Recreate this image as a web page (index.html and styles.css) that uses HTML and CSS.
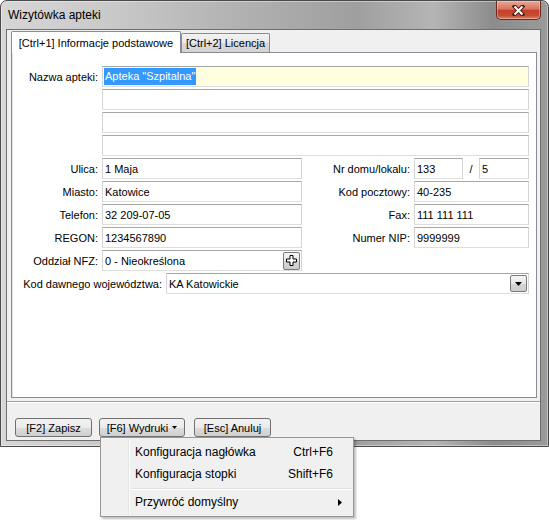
FILE: index.html
```html
<!DOCTYPE html>
<html lang="pl">
<head>
<meta charset="utf-8">
<title>Wizytówka apteki</title>
<link rel="stylesheet" href="styles.css">
</head>
<body>
<div class="screen">
<div class="window">
  <div class="titlebar">
    <span class="title">Wizytówka apteki</span>
    <div class="close">
      <svg width="13" height="11" viewBox="0 0 13 11"><path d="M2.5 1.5 L10.5 9.5 M10.5 1.5 L2.5 9.5" stroke="#4a1d15" stroke-width="4" stroke-linecap="square"/><path d="M2.5 1.5 L10.5 9.5 M10.5 1.5 L2.5 9.5" stroke="#fff" stroke-width="2"/></svg>
    </div>
  </div>
  <div class="client">
    <div class="tabs">
      <div class="tab active">[Ctrl+1] Informacje podstawowe</div>
      <div class="tab">[Ctrl+2] Licencja</div>
    </div>
    <div class="panel">
      <div class="form">
        <div class="lab">Nazwa apteki:</div>
        <div class="edit wide yellow"><span class="sel">Apteka "Szpitalna"</span></div>
        <div class="edit wide"></div>
        <div class="edit wide"></div>
        <div class="edit wide"></div>

        <div class="lab">Ulica:</div>
        <div class="edit">1 Maja</div>
        <div class="lab">Nr domu/lokalu:</div>
        <div class="pair"><div class="edit e1">133</div><span class="slash">/</span><div class="edit e2">5</div></div>

        <div class="lab">Miasto:</div>
        <div class="edit">Katowice</div>
        <div class="lab">Kod pocztowy:</div>
        <div class="edit">40-235</div>

        <div class="lab">Telefon:</div>
        <div class="edit">32 209-07-05</div>
        <div class="lab">Fax:</div>
        <div class="edit">111 111 111</div>

        <div class="lab">REGON:</div>
        <div class="edit">1234567890</div>
        <div class="lab">Numer NIP:</div>
        <div class="edit">9999999</div>

        <div class="lab">Oddział NFZ:</div>
        <div class="edit with-btn"><span>0 - Nieokreślona</span><span class="btn-small plus"><svg width="11" height="11" viewBox="0 0 11 11"><polygon points="4,0.5 7,0.5 7,4 10.5,4 10.5,7 7,7 7,10.5 4,10.5 4,7 0.5,7 0.5,4 4,4" fill="#fff" stroke="#000" stroke-width="1"/></svg></span></div>

        <div class="combo-row">
          <div class="lab lab-long">Kod dawnego województwa:</div>
          <div class="edit combo"><span>KA Katowickie</span><span class="btn-small dd"><svg width="7" height="4" viewBox="0 0 7 4"><polygon points="0,0 7,0 3.5,4" fill="#000"/></svg></span></div>
        </div>
      </div>
    </div>
    <div class="footer">
      <div class="btn">[F2] Zapisz</div>
      <div class="btn wide-btn">[F6] Wydruki <svg width="5" height="3" viewBox="0 0 5 3"><polygon points="0,0 5,0 2.5,3" fill="#000"/></svg></div>
      <div class="btn last">[Esc] Anuluj</div>
    </div>
  </div>
</div>

<div class="menu">
  <div class="item"><span>Konfiguracja nagłówka</span><span>Ctrl+F6</span></div>
  <div class="item"><span>Konfiguracja stopki</span><span>Shift+F6</span></div>
  <div class="sep"></div>
  <div class="item sub"><span>Przywróć domyślny</span><svg width="4" height="7" viewBox="0 0 4 7"><polygon points="0,0 4,3.5 0,7" fill="#000"/></svg></div>
</div>
</div>
</body>
</html>
```

FILE: styles.css
```css
* { box-sizing: border-box; }

html, body {
  margin: 0;
  background: #fff;
}

body {
  font: 11px "Liberation Sans", Arial, sans-serif;
  color: #000;
}

.screen {
  position: relative;
  width: 549px;
  height: 520px;
  overflow: hidden;
}

.window {
  width: 549px;
  height: 447px;
  border: 1px solid #4a4a4a;
  border-radius: 7px 7px 0 0;
  padding: 0 7px 5px 5px;
  display: flex;
  flex-direction: column;
  background: linear-gradient(to right, #d6d6d6 0%, #c9c9c9 20%, #b0b0b0 45%, #9f9f9f 65%, #b5b5b5 79%, #8c8c8c 90%, #9a9a9a 100%);
  box-shadow: inset 0 0 0 1px rgba(255,255,255,.4);
}

.titlebar {
  flex: none;
  height: 28px;
  display: flex;
  align-items: center;
  justify-content: space-between;
}

.title {
  font-size: 12px;
  padding-left: 2px;
}

.close {
  align-self: flex-start;
  width: 45px;
  height: 19px;
  border: 1px solid #6b2a20;
  border-top: none;
  border-radius: 0 0 5px 5px;
  background: linear-gradient(#eaa796, #d9735d 45%, #c2412a 52%, #c84a30 80%, #de8568);
  box-shadow: inset 0 0 0 1px rgba(255,255,255,.3);
  display: flex;
  align-items: center;
  justify-content: center;
}

.client {
  flex: 1;
  background: #f0f0f0;
  border: 1px solid #6e6e6e;
  display: flex;
  flex-direction: column;
  padding: 0 3px 0 4px;
}

.tabs {
  flex: none;
  height: 22px;
  display: flex;
  align-items: flex-end;
  position: relative;
  z-index: 1;
}

.tab {
  height: 19px;
  width: 89px;
  border: 1px solid #898c95;
  border-bottom: none;
  border-radius: 2px 2px 0 0;
  background: linear-gradient(#f3f3f3, #e8e8e8 50%, #dadada 51%, #d3d3d3);
  display: flex;
  align-items: center;
  justify-content: center;
  white-space: nowrap;
}

.tab.active {
  width: 170px;
  height: 22px;
  margin-bottom: -1px;
  background: #fff;
}

.panel {
  flex: 1;
  background: #fff;
  border: 1px solid #898c95;
  box-shadow: inset 1px 0 0 #e3e3e3;
}

.form {
  display: grid;
  grid-template-columns: 90px 200px 112px 115px;
  grid-auto-rows: 21px;
  row-gap: 2px;
  padding-top: 13px;
}

.lab {
  display: flex;
  align-items: center;
  justify-content: flex-end;
  padding-right: 4px;
  white-space: nowrap;
}

.edit {
  border: 1px solid;
  border-color: #a7a7a7 #d5d5d5 #dedede #d5d5d5;
  background: #fff;
  display: flex;
  align-items: center;
  padding: 0 2px;
  white-space: nowrap;
  overflow: hidden;
}

.wide { grid-column: 2 / 5; }

.yellow { background: #ffffdf; }

.sel {
  background: #3399ff;
  color: #fff;
  line-height: 17px;
  padding: 0 1px;
  margin-left: -1px;
}

.pair { display: flex; }
.pair .e1 { width: 49px; }
.pair .e2 { width: 50px; }
.slash {
  flex: 1;
  display: flex;
  align-items: center;
  justify-content: center;
}

.with-btn,
.combo {
  justify-content: space-between;
  padding-right: 1px;
}

.btn-small {
  width: 17px;
  height: 18px;
  border: 1px solid #7a7a7a;
  border-radius: 2px;
  background: linear-gradient(#f6f6f6, #e6e6e6 50%, #d6d6d6 51%, #cdcdcd);
  display: flex;
  align-items: center;
  justify-content: center;
}

.btn-small.dd { height: 17px; }

.combo-row {
  grid-column: 1 / -1;
  display: flex;
}

.lab-long {
  flex: none;
  width: 154px;
}

.combo { flex: 1; }

.footer {
  flex: none;
  margin: 3px -3px 0 -4px;
  border-top: 1px solid #a0a0a0;
  box-shadow: inset 0 1px 0 #fff;
  padding: 16px 0 3px 8px;
  display: flex;
  gap: 7px;
}

.btn {
  width: 77px;
  height: 19px;
  border: 1px solid #707070;
  border-radius: 3px;
  background: linear-gradient(#f2f2f2, #ebebeb 50%, #dddddd 51%, #cfcfcf);
  display: flex;
  align-items: center;
  justify-content: center;
  gap: 4px;
  white-space: nowrap;
}

.btn.wide-btn { width: 86px; }
.btn.last { margin-left: 2px; }

.menu {
  position: absolute;
  left: 100px;
  top: 437px;
  width: 254px;
  border: 1px solid #979797;
  background: #f0f0f0;
  padding: 3px 0;
  box-shadow: 2px 2px 2px rgba(0,0,0,.25);
  font-size: 12px;
}

.menu::before {
  content: "";
  position: absolute;
  left: 27px;
  top: 2px;
  bottom: 2px;
  width: 1px;
  background: #e2e3e3;
  box-shadow: 1px 0 0 #fff;
}

.item {
  height: 22px;
  display: flex;
  align-items: center;
  justify-content: space-between;
  padding: 0 20px 0 34px;
  white-space: nowrap;
}

.item.sub { padding-right: 11px; }

.sep {
  height: 6px;
  margin-left: 30px;
  display: flex;
  align-items: center;
}

.sep::after {
  content: "";
  flex: 1;
  height: 1px;
  background: #e0e0e0;
  box-shadow: 0 1px 0 #fff;
}
```
